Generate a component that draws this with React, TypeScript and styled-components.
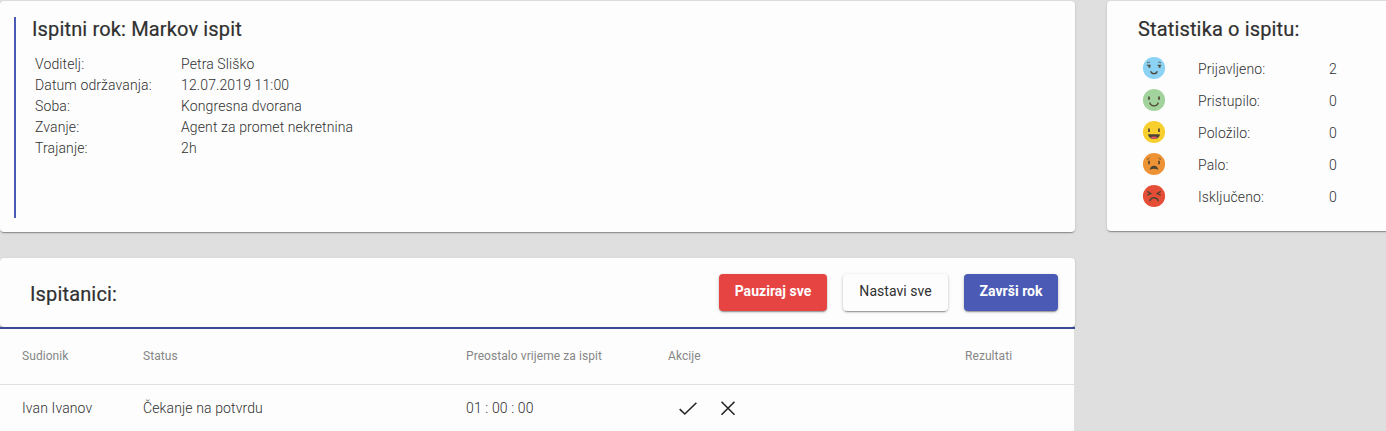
import React from "react";
import styled, { createGlobalStyle } from "styled-components";

const GlobalStyle = createGlobalStyle`
  * { box-sizing: border-box; }
  html, body { margin: 0; height: 100%; overflow: hidden; }
  body {
    background: #dfdfdf;
    font-family: Roboto, "Liberation Sans", sans-serif;
    color: #303030;
    font-size: 14px;
  }
`;

const Page = styled.main`
  display: grid;
  grid-template-columns: 1075px 320px;
  column-gap: 32px;
  align-items: start;
  padding-top: 1px;
  height: 431px;
  overflow: hidden;
`;

const Column = styled.div`
  display: flex;
  flex-direction: column;
  gap: 26px;
`;

const Card = styled.section`
  background: #fdfdfd;
  border-radius: 4px;
  box-shadow: 0 2px 1px -1px rgba(0, 0, 0, 0.2), 0 1px 1px 0 rgba(0, 0, 0, 0.14),
    0 1px 3px 0 rgba(0, 0, 0, 0.12);
`;

const ExamCard = styled(Card)`
  height: 231px;
  padding: 16px 14px 15px;
`;

const ExamBody = styled.div`
  height: 201px;
  border-left: 2px solid #4b5bb5;
  padding-left: 16px;
`;

const Title = styled.h2`
  margin: 0;
  font-size: 20px;
  line-height: 24px;
  font-weight: 400;
  letter-spacing: 0.15px;
  color: #303030;
  -webkit-text-stroke: 0.2px currentColor;
`;

const Details = styled.dl`
  display: grid;
  grid-template-columns: 146px auto;
  grid-auto-rows: 21px;
  margin: 13px 0 0 3px;
  line-height: 21px;
  font-weight: 300;
  letter-spacing: 0.12px;
`;

const Term = styled.dt`
  margin: 0;
`;

const Value = styled.dd`
  margin: 0;
`;

const StatsCard = styled(Card)`
  height: 230px;
  padding: 16px 31px;
`;

const StatsList = styled.ul`
  list-style: none;
  margin: 11px 0 0;
  padding: 0 0 0 3.5px;
`;

const Stat = styled.li`
  display: grid;
  grid-template-columns: 56.5px 131px auto;
  height: 32px;
  line-height: 34px;
  font-weight: 300;
  letter-spacing: 0.12px;
`;

const Face = styled.svg`
  display: block;
  width: 24px;
  height: 24px;
  margin-top: 4px;
`;

const Header = styled(Card)`
  display: flex;
  align-items: center;
  justify-content: space-between;
  height: 69px;
  padding: 0 17px 0 30px;
`;

const HeaderTitle = styled(Title)`
  margin-top: 2px;
`;

const Actions = styled.div`
  display: flex;
  gap: 16px;
`;

const tones = {
  warn: { bg: "#e64442", fg: "#ffffff", weight: 700, width: 108 },
  plain: { bg: "#fdfdfd", fg: "#303030", weight: 400, width: 105 },
  primary: { bg: "#4b5bb5", fg: "#ffffff", weight: 700, width: 94 },
};

const Button = styled.button<{ $tone: keyof typeof tones }>`
  width: ${(p) => tones[p.$tone].width}px;
  height: 37px;
  padding: 0 0 2px;
  border: 0;
  border-radius: 4px;
  background: ${(p) => tones[p.$tone].bg};
  color: ${(p) => tones[p.$tone].fg};
  font: ${(p) => tones[p.$tone].weight} 14px/35px Roboto, sans-serif;
  letter-spacing: 0.03px;
  white-space: nowrap;
  box-shadow: 0 3px 1px -2px rgba(0, 0, 0, 0.2), 0 1px 2px 0 rgba(0, 0, 0, 0.24),
    0 1px 4px 0 rgba(0, 0, 0, 0.1);
`;

const Panel = styled.div`
  width: 1075px;
`;

const Table = styled.div`
  width: 1074px;
  background: #fdfdfd;
`;

const Divider = styled.div`
  width: 1075px;
  height: 2px;
  background: #3b4a98;
`;

const Row = styled.div<{ $head?: boolean }>`
  display: grid;
  grid-template-columns: 121px 323px 202px 297px 1fr;
  align-items: center;
  height: ${(p) => (p.$head ? 56 : 48)}px;
  padding: 0 0 2px 22px;
  border-bottom: 1px solid #e0e0e0;
  font-size: ${(p) => (p.$head ? 12 : 14)}px;
  font-weight: ${(p) => (p.$head ? 400 : 300)};
  letter-spacing: ${(p) => (p.$head ? 0.07 : 0.12)}px;
  color: ${(p) => (p.$head ? "#868686" : "#303030")};
`;

const RowActions = styled.div`
  display: flex;
  gap: 16px;
  padding-left: 8px;
`;

const Glyph = styled.svg`
  display: block;
  width: 24px;
  height: 24px;
  fill: none;
  stroke: #252525;
  stroke-width: 1.6;
`;

const INK = "#4d4534";

type Mood = "shy" | "smile" | "laugh" | "sad" | "angry";

const faces: Record<Mood, { fill: string; marks: React.ReactNode }> = {
  shy: {
    fill: "#8bd2f4",
    marks: (
      <>
        <path d="M5 7q1.200-1 2.800-.8M16.200 6.200q1.600-.2 2.800.8" strokeWidth=".8" />
        <path d="M4.800 9.200h3.700M15.500 9.200h3.700" strokeWidth="1.100" />
        <path d="M7.400 9v2.800M17.600 9v2.800" strokeWidth="1.800" />
        <path d="M8.700 15.200q.8 2.500 3.300 2.500t3.300-2.500" />
      </>
    ),
  },
  smile: {
    fill: "#a3d39c",
    marks: (
      <>
        <path d="M7 8.500v3.300M17 8.500v3.300" strokeWidth="1.700" />
        <path d="M7.700 14.500q.9 3.300 4.300 3.300t4.300-3.300" />
      </>
    ),
  },
  laugh: {
    fill: "#f7cf2e",
    marks: (
      <>
        <path d="M7 8.500v3.400M17 8.500v3.400" strokeWidth="1.700" />
        <path d="M6 14.200h12q-.6 4.700-6 4.700t-6-4.700z" fill={INK} stroke="none" />
        <path d="M8.200 17.800q3.800-2.400 7.600 0-3.800 2-7.600 0z" fill="#e95a69" stroke="none" />
      </>
    ),
  },
  sad: {
    fill: "#ed9235",
    marks: (
      <>
        <path d="M5 7.300q1.800-.3 2.600-1.500M16.400 5.800q.8 1.200 2.600 1.500" strokeWidth=".8" />
        <path d="M7 8.800v3.500M17 8.800v3.500" strokeWidth="1.700" />
        <path d="M7.700 17.700q.8-3.900 4.300-3.900t4.300 3.900q-4.300-1.800-8.600 0z" fill={INK} stroke="none" />
      </>
    ),
  },
  angry: {
    fill: "#e54d36",
    marks: (
      <>
        <path d="M5.300 7.400l3.500 2.200-3.500 1.500M18.700 7.400l-3.500 2.200 3.500 1.500" strokeWidth="1.300" />
        <path d="M7.600 17.200q1-3.500 4.400-3.500t4.400 3.500" strokeWidth="1.400" />
      </>
    ),
  },
};

const MoodIcon = ({ mood }: { mood: Mood }) => (
  <Face viewBox="0 0 24 24" fill="none" stroke={INK} strokeWidth="1.200">
    <circle cx="12" cy="12" r="11.100" fill={faces[mood].fill} stroke="none" />
    {faces[mood].marks}
  </Face>
);

const details = [
  ["Voditelj:", "Petra Sliško"],
  ["Datum održavanja:", "12.07.2019 11:00"],
  ["Soba:", "Kongresna dvorana"],
  ["Zvanje:", "Agent za promet nekretnina"],
  ["Trajanje:", "2h"],
];

const stats: [Mood, string, number][] = [
  ["shy", "Prijavljeno:", 2],
  ["smile", "Pristupilo:", 0],
  ["laugh", "Položilo:", 0],
  ["sad", "Palo:", 0],
  ["angry", "Isključeno:", 0],
];

export default function App() {
  return (
    <>
      <GlobalStyle />
      <Page>
        <Column>
          <ExamCard>
            <ExamBody>
              <Title>Ispitni rok: Markov ispit</Title>
              <Details>
                {details.map(([term, value]) => (
                  <React.Fragment key={term}>
                    <Term>{term}</Term>
                    <Value>{value}</Value>
                  </React.Fragment>
                ))}
              </Details>
            </ExamBody>
          </ExamCard>
          <Panel>
            <Header>
              <HeaderTitle>Ispitanici:</HeaderTitle>
              <Actions>
                <Button $tone="warn">Pauziraj sve</Button>
                <Button $tone="plain">Nastavi sve</Button>
                <Button $tone="primary">Završi rok</Button>
              </Actions>
            </Header>
            <Divider />
            <Table>
              <Row $head>
                <span>Sudionik</span>
                <span>Status</span>
                <span>Preostalo vrijeme za ispit</span>
                <span>Akcije</span>
                <span>Rezultati</span>
              </Row>
              <Row>
                <span>Ivan Ivanov</span>
                <span>Čekanje na potvrdu</span>
                <span>01 : 00 : 00</span>
                <RowActions>
                  <Glyph viewBox="0 0 24 24">
                    <path d="M3.700 13.200L8.800 18 20.400 6.700" />
                  </Glyph>
                  <Glyph viewBox="0 0 24 24">
                    <path d="M5.500 5.800L18.500 18.800M18.500 5.800L5.500 18.800" />
                  </Glyph>
                </RowActions>
                <span />
              </Row>
            </Table>
          </Panel>
        </Column>
        <StatsCard>
          <Title>Statistika o ispitu:</Title>
          <StatsList>
            {stats.map(([mood, label, count]) => (
              <Stat key={label}>
                <MoodIcon mood={mood} />
                <span>{label}</span>
                <span>{count}</span>
              </Stat>
            ))}
          </StatsList>
        </StatsCard>
      </Page>
    </>
  );
}
